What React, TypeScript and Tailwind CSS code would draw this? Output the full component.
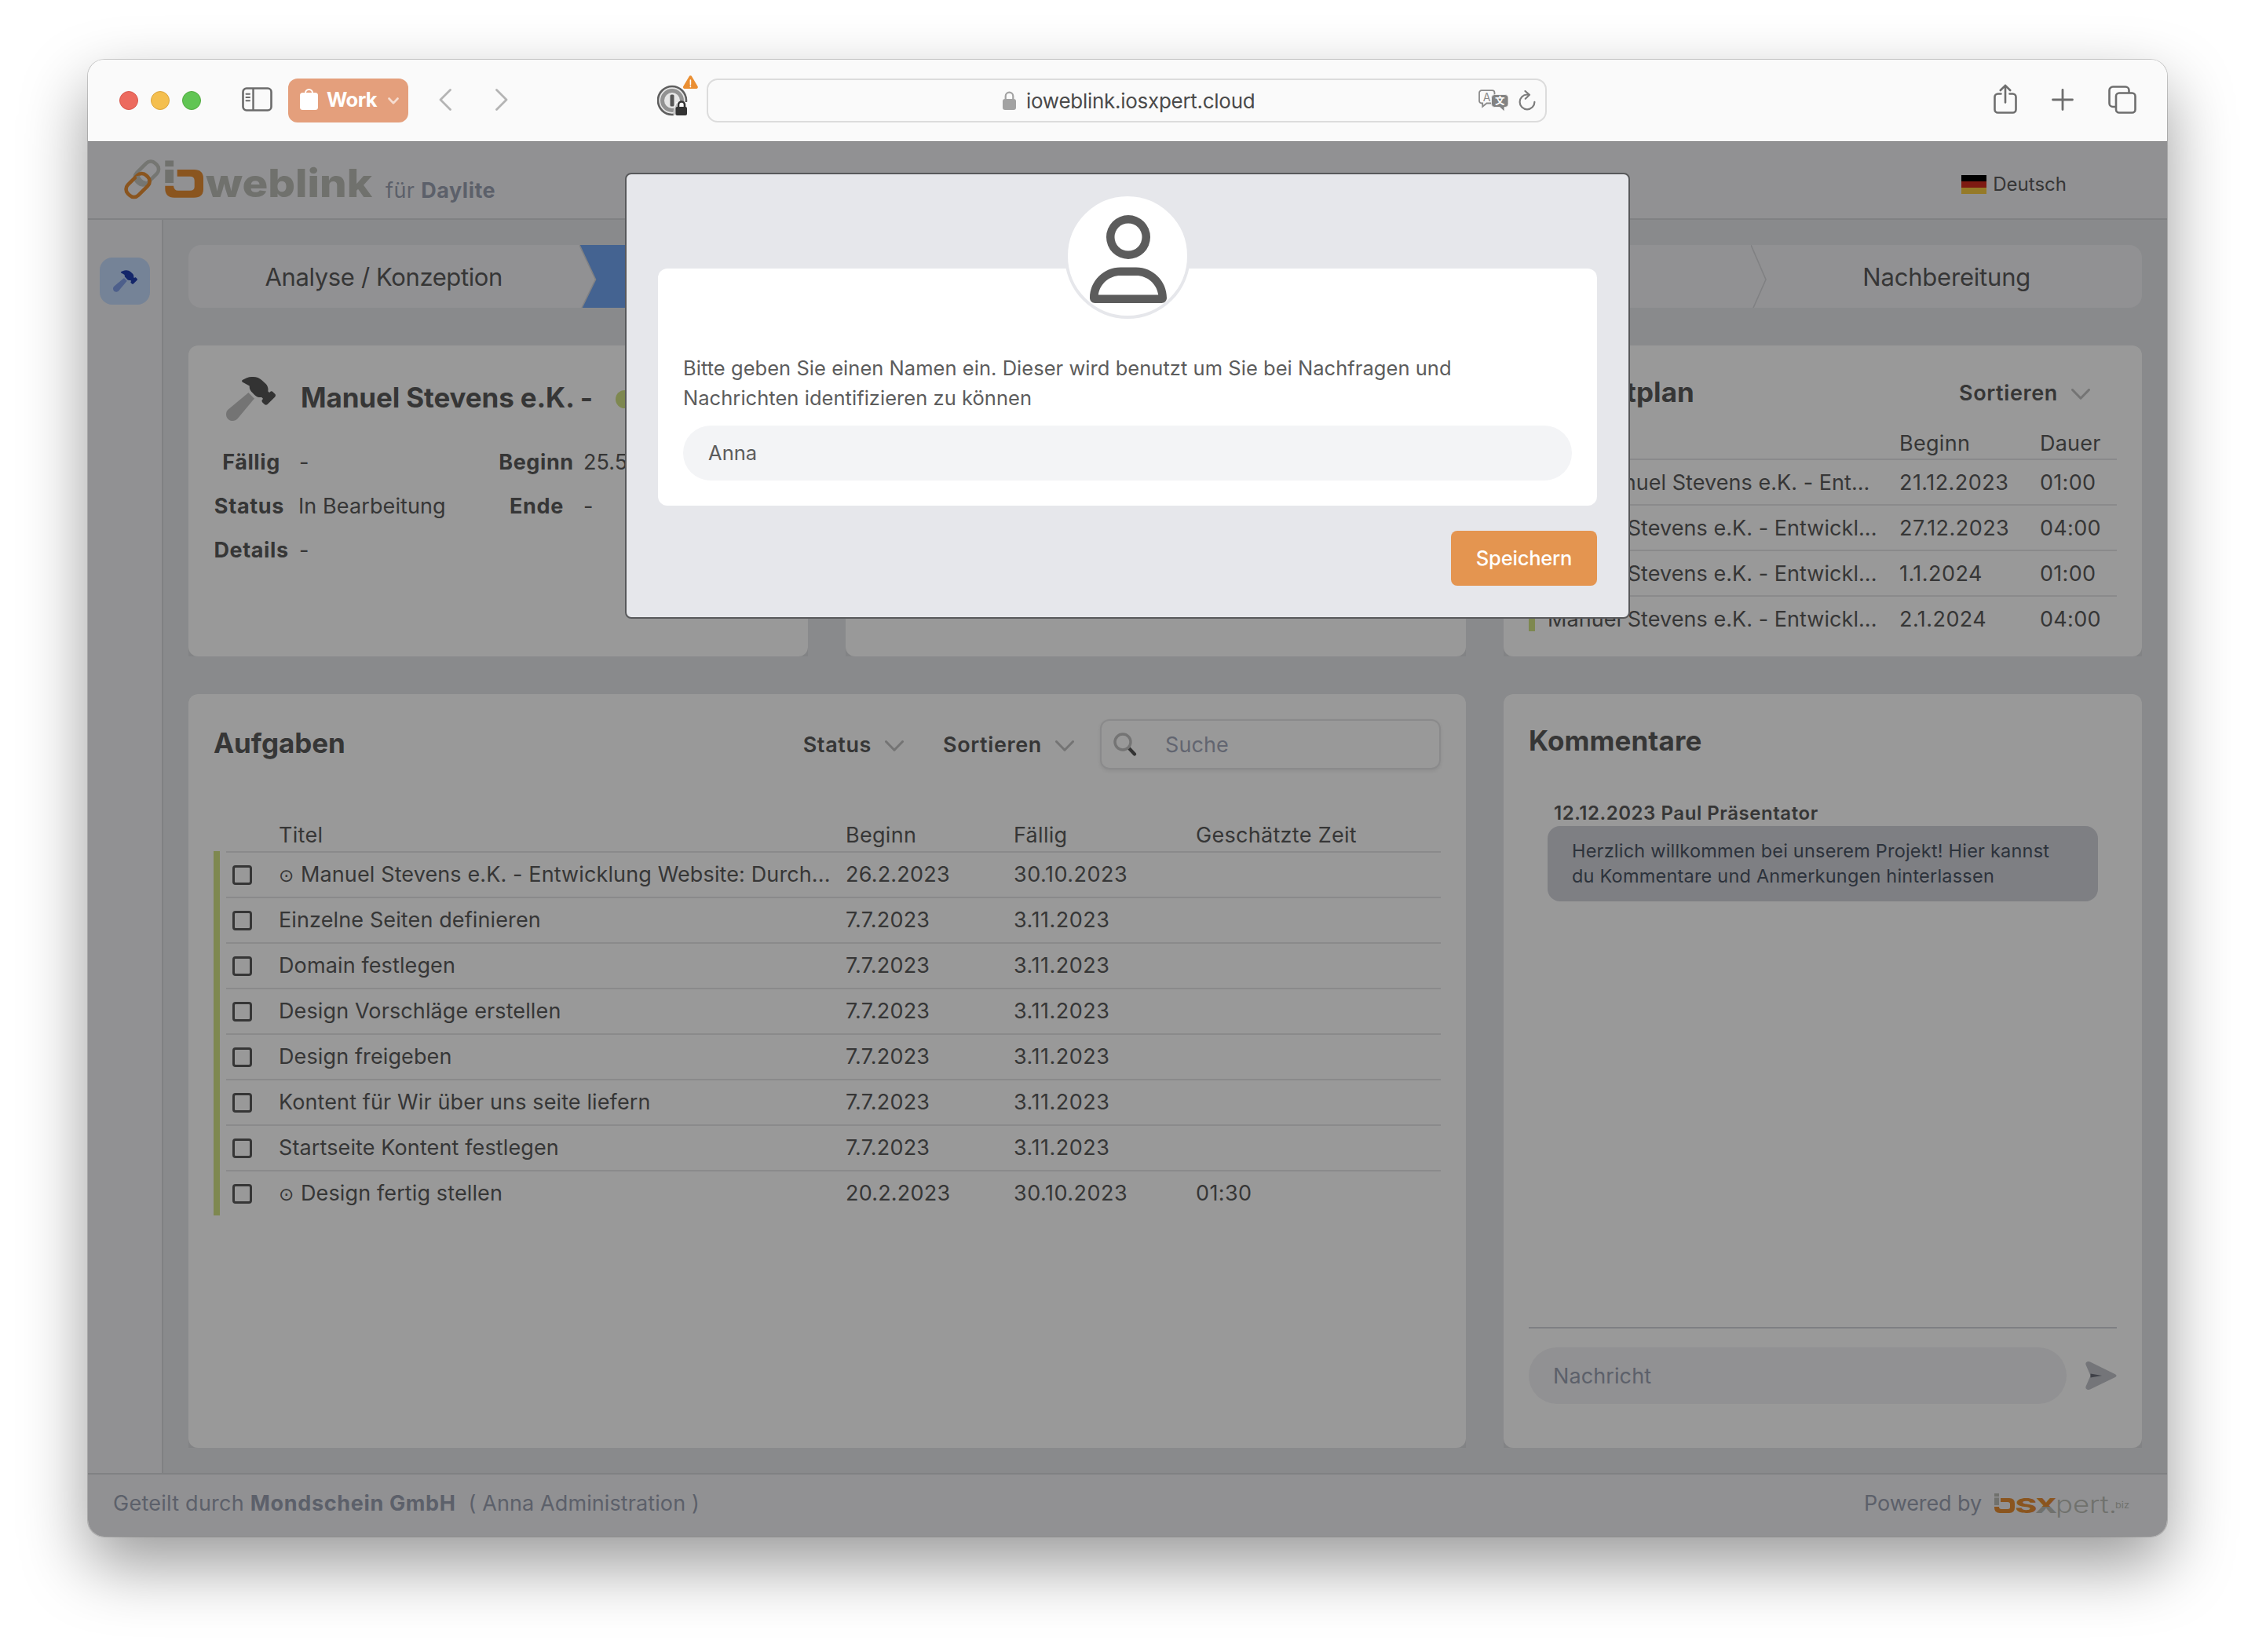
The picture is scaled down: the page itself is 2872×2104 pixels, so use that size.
import type { ReactNode } from "react";
import { FaRegUser } from "react-icons/fa6";

const tasks = [
  { milestone: true, title: "Manuel Stevens e.K. - Entwicklung Website: Durch...", start: "26.2.2023", due: "30.10.2023", time: "" },
  { title: "Einzelne Seiten definieren", start: "7.7.2023", due: "3.11.2023", time: "" },
  { title: "Domain festlegen", start: "7.7.2023", due: "3.11.2023", time: "" },
  { title: "Design Vorschläge erstellen", start: "7.7.2023", due: "3.11.2023", time: "" },
  { title: "Design freigeben", start: "7.7.2023", due: "3.11.2023", time: "" },
  { title: "Kontent für Wir über uns seite liefern", start: "7.7.2023", due: "3.11.2023", time: "" },
  { title: "Startseite Kontent festlegen", start: "7.7.2023", due: "3.11.2023", time: "" },
  { milestone: true, title: "Design fertig stellen", start: "20.2.2023", due: "30.10.2023", time: "01:30" },
];

const schedule = [
  { milestone: true, title: "Manuel Stevens e.K. - Ent...", start: "21.12.2023", length: "01:00" },
  { title: "Manuel Stevens e.K. - Entwickl...", start: "27.12.2023", length: "04:00" },
  { title: "Manuel Stevens e.K. - Entwickl...", start: "1.1.2024", length: "01:00" },
  { title: "Manuel Stevens e.K. - Entwickl...", start: "2.1.2024", length: "04:00" },
];

function Hammer({ className, head, handle }: { className: string; head: string; handle: string }) {
  return (
    <svg viewBox="0 0 576 512" className={className}>
      <path
        fill={head}
        d="M413.5 237.5c-28.2 4.8-58.2-3.6-80-25.4l-38.1-38.1C280.4 159 272 138.8 272 117.6V105.5L192.3 62c-5.3-2.9-8.6-8.6-8.3-14.7s3.9-11.5 9.5-14l47.2-21C259.1 4.2 279 0 299.2 0h18.1c36.7 0 72 14 98.7 39.1l44.6 42c24.2 22.8 33.2 55.7 26.6 86L503 183l8-8c9.4-9.4 24.6-9.4 33.9 0l24 24c9.4 9.4 9.4 24.6 0 33.9l-88 88c-9.4 9.4-24.6 9.4-33.9 0l-24-24c-9.4-9.4-9.4-24.6 0-33.9l8-8-17.5-17.5z"
      />
      <path
        fill={handle}
        d="M27.4 377.1L260.9 182.6c3.5 4.9 7.5 9.6 11.8 14l38.1 38.1c6 6 12.4 11.2 19.2 15.7L134.9 484.6c-14.5 17.4-36 27.4-58.6 27.4C34.1 512 0 477.8 0 435.7c0-22.6 10.1-44.1 27.4-58.6z"
      />
    </svg>
  );
}

function ChevronDown({ className }: { className: string }) {
  return (
    <svg viewBox="0 0 24 14" className={className} fill="none" stroke="#747474" strokeWidth="3" strokeLinecap="round" strokeLinejoin="round">
      <path d="M1.5 1.5L12 12.2L22.5 1.5" />
    </svg>
  );
}

function Dropdown({ label, className }: { label: string; className: string }) {
  return (
    <div className={`flex items-center ${className}`}>
      <span className="pt-[2px] text-[27px] font-semibold tracking-[0.62px]">{label}</span>
      <ChevronDown className="ml-[17px] mt-1 h-[14px] w-6" />
    </div>
  );
}

function Milestone() {
  return <span className="inline-block w-[28px] font-['DejaVu_Sans'] text-[23px] leading-none">⊙</span>;
}

function Card({ className, children }: { className: string; children: ReactNode }) {
  return (
    <div className={`rounded-t-[12px] bg-[#828385] ${className}`}>
      <div className="flex h-full flex-col rounded-[12px] bg-[#999999] px-8">{children}</div>
    </div>
  );
}

function Toolbar() {
  return (
    <div className="flex h-[104px] shrink-0 items-center bg-[#fafafa] pl-10">
      <div className="flex gap-4">
        <span className="size-6 rounded-full border border-[#d8584d] bg-[#ec6a5e]" />
        <span className="size-6 rounded-full border border-[#dba43c] bg-[#f4bf4f]" />
        <span className="size-6 rounded-full border border-[#52a93f] bg-[#61c554]" />
      </div>
      <svg viewBox="0 0 39 31" className="mb-[3px] ml-[52px] h-[31px] w-[39px]" fill="none" stroke="#6b6b6b">
        <rect x="1.5" y="1.5" width="36" height="28" rx="4.5" strokeWidth="2.6" />
        <path d="M14.5 2V29" strokeWidth="2.4" />
        <path d="M5.5 8.7H10M5.5 13H10M5.5 17.3H10" strokeWidth="2" strokeLinecap="round" />
      </svg>
      <div className="ml-5 flex h-14 w-[153px] items-center rounded-[12px] bg-[#e49f7c] pl-[15px]">
        <svg viewBox="0 0 23 27" className="mb-1 h-[27px] w-[23px]">
          <rect y="5" width="23" height="22" rx="3.5" fill="#fff" />
          <path d="M7 7V5.5a4.5 4.5 0 0 1 9 0V7" fill="none" stroke="#fff" strokeWidth="2" />
        </svg>
        <span className="ml-[11px] pb-[2px] text-[25.5px] font-bold tracking-[-0.6px] text-white">Work</span>
        <svg viewBox="0 0 14 9" className="ml-[14px] h-[9px] w-[14px]" fill="none" stroke="#f6ddd1" strokeWidth="2.6" strokeLinecap="round" strokeLinejoin="round">
          <path d="M1.5 1.5L7 7.3L12.5 1.5" />
        </svg>
      </div>
      <svg viewBox="0 0 16 28" className="mb-[3px] ml-[39px] h-7 w-4" fill="none" stroke="#b4b4b4" strokeWidth="2.8" strokeLinecap="round" strokeLinejoin="round">
        <path d="M14.5 1.5L2 14L14.5 26.5" />
      </svg>
      <svg viewBox="0 0 16 28" className="mb-[3px] ml-14 h-7 w-4" fill="none" stroke="#b4b4b4" strokeWidth="2.8" strokeLinecap="round" strokeLinejoin="round">
        <path d="M1.5 1.5L14 14L1.5 26.5" />
      </svg>
      <svg viewBox="0 0 54 54" className="mb-[10px] ml-[190px] h-[54px] w-[54px]">
        <circle cx="19" cy="32" r="18" fill="#e6e6e6" stroke="#5f5f5f" strokeWidth="2.6" />
        <circle cx="19" cy="32" r="12.5" fill="none" stroke="#929292" strokeWidth="5" />
        <rect x="16.5" y="24.5" width="5" height="15" rx="1.5" fill="#555" />
        <path d="M21 54V43L24 34H40V54Z" fill="#fafafa" />
        <path d="M20.5 45L25 35V50.5H20.5Z" fill="#c4c4c4" />
        <rect x="23.5" y="40" width="14.5" height="11" rx="2" fill="#333" />
        <path d="M27 41V37.5a4 4 0 0 1 8 0V41" fill="none" stroke="#333" strokeWidth="2.6" />
        <path d="M40.6 1.4a2 2 0 0 1 3.6 0L51.6 14a2 2 0 0 1-1.8 3H35a2 2 0 0 1-1.8-3Z" fill="#ea8f33" />
        <path d="M42.4 6V11.6M42.4 13.6V14.6" stroke="#fff" strokeWidth="1.6" strokeLinecap="round" />
      </svg>
      <div className="ml-[9px] flex h-14 w-[1070px] items-center rounded-[14px] border-2 border-[#dcdcdc]">
        <svg viewBox="0 0 17 24" className="ml-[375px] h-6 w-[17px]">
          <rect y="10" width="17" height="14" rx="3" fill="#a2a2a2" />
          <path d="M3.7 11V6.5a4.8 4.8 0 0 1 9.6 0V11" fill="none" stroke="#a2a2a2" strokeWidth="2.2" />
        </svg>
        <span className="ml-[13px] w-[576px] pt-px text-[26px] tracking-[-0.28px] text-[#4a4a4a]">ioweblink.iosxpert.cloud</span>
        <svg viewBox="0 0 38 28" className="h-7 w-[38px]">
          <path d="M4 1.2H17.5a3 3 0 0 1 3 3V14.5a3 3 0 0 1-3 3H10.5L5.2 21.8V17.5H4a3 3 0 0 1-3-3V4.2a3 3 0 0 1 3-3Z" fill="none" stroke="#8a8a8a" strokeWidth="1.8" />
          <text x="10.7" y="14.6" textAnchor="middle" fontFamily="Inter" fontSize="14" fill="#8a8a8a">A</text>
          <path d="M20.5 6.5H34a4 4 0 0 1 4 4V18.500a4 4 0 0 1-4 4H33V28L27 22.5H20.500a4 4 0 0 1-4-4V10.500a4 4 0 0 1 4-4Z" fill="#828282" stroke="#fafafa" strokeWidth=".8" />
          <text x="27.3" y="19" textAnchor="middle" fontFamily="'Noto Sans CJK SC', sans-serif" fontWeight="700" fontSize="12.500" fill="#fff">文</text>
        </svg>
        <svg viewBox="0 0 22 26" className="ml-[13px] h-[26px] w-[22px]" fill="none" stroke="#7c7c7c" strokeWidth="2.2" strokeLinecap="round" strokeLinejoin="round">
          <path d="M12.500 5.500H11a9.400 9.400 0 1 0 9.400 9.400M8.500 1L14 5.800L8.800 10.800" />
        </svg>
      </div>
      <svg viewBox="0 0 30 38" className="mb-[5px] ml-[569px] h-[38px] w-[30px]" fill="none" stroke="#6e6e6e" strokeWidth="2.600" strokeLinecap="round" strokeLinejoin="round">
        <path d="M9.500 12.500H5.500a4 4 0 0 0-4 4V32.500a4 4 0 0 0 4 4H24.500a4 4 0 0 0 4-4V16.500a4 4 0 0 0-4-4H20.500M15 23.500V1.800M8.800 8L15 1.800L21.200 8" />
      </svg>
      <svg viewBox="0 0 28 28" className="mb-[3px] ml-11 size-7" stroke="#6e6e6e" strokeWidth="2.800" strokeLinecap="round">
        <path d="M14 1.500V26.500M1.500 14H26.500" />
      </svg>
      <svg viewBox="0 0 36 36" className="mb-[3px] ml-11 size-9" fill="none" stroke="#6e6e6e" strokeWidth="2.600" strokeLinejoin="round">
        <rect x="10" y="9.500" width="24.500" height="25" rx="4" />
        <path d="M9.500 27H6a4.500 4.500 0 0 1-4.500-4.500V6A4.500 4.500 0 0 1 6 1.500H22A4.500 4.500 0 0 1 26.500 6V9" />
      </svg>
    </div>
  );
}

function WeblinkLogo() {
  return (
    <svg viewBox="158 196 320 64" className="ml-[46px] mt-[15px] h-16 w-[320px] overflow-visible">
      <g fill="none" strokeWidth="4.600">
        <rect x="-16.500" y="-9.500" width="33" height="19" rx="8" transform="translate(187 220.500) rotate(-45)" stroke="#757672" />
        <rect x="-16.500" y="-9.500" width="33" height="19" rx="8" transform="translate(175.600 236) rotate(-45)" stroke="#8a551f" />
        <path d="M175.500 224Q177.500 231.500 185.500 233" stroke="#757672" />
      </g>
      <rect x="210.300" y="204.500" width="10.800" height="7.600" fill="#70716d" />
      <rect x="210.300" y="216" width="10.800" height="17" fill="#70716d" />
      <path
        fill="#8a551f"
        d="M225.700 216H247Q259 216 259 227V241Q259 251.700 247 251.700H222Q210.300 251.700 210.300 240V236.700H221Q221.500 242.700 227 242.700H242Q247.700 242.700 247.700 238V230Q247.700 224.700 242 224.700H225.700Z"
      />
      <text x="262" y="251.300" textLength="212" lengthAdjust="spacingAndGlyphs" fontFamily="Inter, sans-serif" fontWeight="800" fontSize="50" fill="#70716d">
        weblink
      </text>
    </svg>
  );
}

function ExpertLogo() {
  return (
    <svg viewBox="0 0 174 32" className="mt-[5px] h-8 w-[174px] overflow-visible">
      <defs>
        <linearGradient id="x-split" x1="0" y1="0" x2="0" y2="1">
          <stop offset="0.550" stopColor="#8a551f" />
          <stop offset="0.550" stopColor="#70716d" />
        </linearGradient>
      </defs>
      <rect width="6" height="4" fill="#70716d" />
      <rect y="5.500" width="6" height="9.500" fill="#70716d" />
      <path fill="#8a551f" d="M8 6H19Q26 6 26 13V18Q26 25 19 25H7Q0 25 0 18V17H6Q6 20 9 20H17Q20 20 20 17.500V13.500Q20 11 17 11H8Z" />
      <text x="26.500" y="25" textLength="28" lengthAdjust="spacingAndGlyphs" fontFamily="Inter, sans-serif" fontWeight="800" fontSize="26" fill="#8a551f">S</text>
      <text x="52" y="25" textLength="28" lengthAdjust="spacingAndGlyphs" fontFamily="Inter, sans-serif" fontWeight="800" fontSize="26" fill="url(#x-split)">X</text>
      <text x="78" y="25" textLength="78" lengthAdjust="spacingAndGlyphs" fontFamily="Inter, sans-serif" fontWeight="300" fontSize="30" fill="#70716d">pert.</text>
      <text x="154" y="19" textLength="18" lengthAdjust="spacingAndGlyphs" fontFamily="Inter, sans-serif" fontWeight="400" fontSize="11" fill="#70716d">biz</text>
    </svg>
  );
}

function Header() {
  return (
    <header className="flex h-[100px] shrink-0 items-start border-b-2 border-t border-b-[#808183] border-t-[#747475] bg-[#919193]">
      <WeblinkLogo />
      <p className="ml-[13px] mt-[42px] text-[27px] leading-10 tracking-[0.400px] text-[#5c606a]">
        für <span className="font-bold tracking-[0.500px]">Daylite</span>
      </p>
      <div className="ml-auto mr-[128px] mt-[34px] flex h-10 items-center">
        <div className="flex h-6 w-8 flex-col">
          <span className="h-2 bg-black" />
          <span className="h-2 bg-[#7e1a12]" />
          <span className="h-2 bg-[#957a28]" />
        </div>
        <span className="ml-[8px] text-[24px]">Deutsch</span>
      </div>
    </header>
  );
}

function Steps() {
  return (
    <div className="grid h-20 shrink-0 grid-cols-5 overflow-hidden rounded-[16px] bg-[#919193] text-[31px] tracking-[-0.380px]">
      <div className="flex items-center justify-center pt-[2px]">Analyse / Konzeption</div>
      <div className="relative bg-[#446391]">
        <svg viewBox="0 0 22 80" className="absolute left-0 top-0 h-20 w-[22px]">
          <path d="M0 0L20.500 44L3 80H0Z" fill="#919193" />
          <path d="M0 0L20.500 44L3 80" fill="none" stroke="#808183" strokeWidth="1.600" />
        </svg>
      </div>
      <div />
      <div />
      <div className="relative flex items-center justify-center pt-[2px] tracking-[-0.200px]">
        <svg viewBox="0 0 22 80" className="absolute left-0 top-0 h-20 w-[22px]">
          <path d="M0 0L19 44L3 80" fill="none" stroke="#808183" strokeWidth="1.600" />
        </svg>
        Nachbereitung
      </div>
    </div>
  );
}

function ProjectCard() {
  return (
    <Card className="h-[396px] w-[789px]">
      <div className="mt-9 flex h-16 items-center pl-4">
        <Hammer className="h-14 w-[63px]" head="#333333" handle="#747474" />
        <h2 className="ml-[32px] pb-[3px] text-[35px] font-bold tracking-[-0.120px]">Manuel Stevens e.K. -</h2>
        <span className="ml-[29px] size-[23px] rounded-full bg-[#7e8850]" />
      </div>
      <div className="mt-[21px] grid grid-cols-[107px_256px_107px_1fr] text-[27px] leading-[56px] tracking-[0.100px]">
        <b className="w-24 text-center font-bold tracking-[0.600px]">Fällig</b>
        <span className="pl-[2px]">-</span>
        <b className="w-24 text-center font-bold tracking-[0.600px]">Beginn</b>
        <span className="pl-px">25.5.2023</span>
        <b className="w-[91px] text-center font-bold tracking-[0.700px]">Status</b>
        <span className="pl-px">In Bearbeitung</span>
        <b className="w-[97px] text-center font-bold tracking-[0.700px]">Ende</b>
        <span className="pl-px">-</span>
        <b className="w-24 text-center font-bold tracking-[0.600px]">Details</b>
        <span className="pl-[2px]">-</span>
      </div>
    </Card>
  );
}

function ScheduleCard() {
  return (
    <Card className="h-[396px] w-[813px]">
      <div className="mt-8 flex h-14 shrink-0 items-center">
        <h2 className="w-[211px] whitespace-nowrap pb-[2px] text-right text-[35px] font-bold tracking-[0.100px]">Projektplan</h2>
        <Dropdown label="Sortieren" className="ml-auto mr-[34px]" />
      </div>
      <div className="mt-4 flex h-10 shrink-0 items-center pt-[2px] text-[27px]">
        <span className="w-[472px]" />
        <span className="w-[179px] tracking-[0.300px]">Beginn</span>
        <span className="tracking-[0.200px]">Dauer</span>
      </div>
      <div className="flex h-[220px] shrink-0 overflow-hidden text-[27px]">
        <div className="h-[232px] w-2 shrink-0 bg-[#7e8850]" />
        <div className="ml-2 flex grow flex-col">
          {schedule.map((s, i) => (
            <div key={i} className="flex h-[58px] shrink-0 items-center border-t-2 border-[#8a8a8b] pt-[2px]">
              <span className="w-[456px] whitespace-nowrap pl-2 tracking-[0.050px]">
                {s.milestone && (
                  <span className="ml-[29px]">
                    <Milestone />
                  </span>
                )}
                {s.title}
              </span>
              <span className="w-[179px] tracking-[0.450px]">{s.start}</span>
              <span className="tracking-[0.300px]">{s.length}</span>
            </div>
          ))}
        </div>
      </div>
    </Card>
  );
}

function TasksCard() {
  return (
    <Card className="h-[960px] w-[1627px]">
      <div className="mt-8 flex h-16 items-center">
        <h2 className="pb-[3px] text-[35px] font-bold tracking-[-0.050px]">Aufgaben</h2>
        <Dropdown label="Status" className="ml-auto" />
        <Dropdown label="Sortieren" className="ml-[50px]" />
        <div className="ml-[33px] flex h-16 w-[434px] items-center rounded-[12px] border-2 border-[#8a8a8b] pl-[15px] shadow-[0_2px_4px_rgba(0,0,0,0.08)]">
          <svg viewBox="0 0 30 30" className="size-[30px]" fill="none">
            <path d="M20 20L27 27.500" stroke="#333333" strokeWidth="4.200" strokeLinecap="round" />
            <circle cx="12" cy="12" r="10" stroke="#747474" strokeWidth="3.400" />
          </svg>
          <span className="ml-[36px] pt-[2px] text-[27px] tracking-[0.100px] text-[#626570]">Suche</span>
        </div>
      </div>
      <div className="mt-16 flex h-10 items-center pt-px text-[27px] tracking-[0.300px]">
        <span className="w-[805px] pl-[83px]">Titel</span>
        <span className="w-[214px]">Beginn</span>
        <span className="w-[232px]">Fällig</span>
        <span>Geschätzte Zeit</span>
      </div>
      <div className="flex text-[27px]">
        <div className="w-2 bg-[#7e8850]" />
        <div className="ml-2 grow">
          {tasks.map((t, i) => (
            <div key={i} className="flex h-[58px] items-center border-t-2 border-[#8a8a8b] pt-px">
              <span className="mb-px ml-2 size-[25px] rounded-[4px] border-[3px] border-[#363636]" />
              <span className="ml-[34px] w-[722px] whitespace-nowrap tracking-[0.120px]">
                {t.milestone && <Milestone />}
                {t.title}
              </span>
              <span className="w-[214px] tracking-[0.200px]">{t.start}</span>
              <span className="w-[232px] tracking-[0.500px]">{t.due}</span>
              <span className="tracking-[0.400px]">{t.time}</span>
            </div>
          ))}
        </div>
      </div>
    </Card>
  );
}

function CommentsCard() {
  return (
    <Card className="h-[960px] w-[813px]">
      <h2 className="mt-8 text-[35px] font-bold leading-[54px] tracking-[0.100px]">Kommentare</h2>
      <p className="ml-8 mt-[49px] text-[24px] font-semibold leading-[33px] tracking-[0.550px]">12.12.2023 Paul Präsentator</p>
      <p className="mx-6 rounded-[16px] bg-[#7e7f83] px-[31px] py-4 text-[23.500px] leading-8 tracking-[0.210px] text-[#2c323b]">
        Herzlich willkommen bei unserem Projekt! Hier kannst
        <br />
        du Kommentare und Anmerkungen hinterlassen
      </p>
      <div className="mb-14 mt-auto flex items-center border-t-2 border-[#7e7f83] pt-6">
        <div className="flex h-[72px] w-[685px] items-center rounded-full bg-[#919193] pl-[31px] pt-[2px] text-[27px] tracking-[0.100px] text-[#5c606a]">Nachricht</div>
        <svg viewBox="0 0 40 36" className="ml-6 h-9 w-10">
          <path d="M.5 4C-.5 1 3-1 6 .5L38 16.200c2 1 2 2.800 0 3.800L6 35.500C3 37-.5 35 .5 32L6.500 18Z" fill="#747579" />
          <path d="M6.500 15.500L21 18L6.500 20.500Z" fill="#3f4148" />
        </svg>
      </div>
    </Card>
  );
}

function NameDialog() {
  return (
    <div className="absolute left-[684px] top-[144px] flex h-[568px] w-[1280px] flex-col rounded-[8px] border-2 border-[#58595b] bg-[#e6e7eb] px-10 text-[25.500px] tracking-[0.040px] text-[#5c5c5c]">
      <div className="relative mt-[120px] rounded-[12px] bg-white px-8 pb-8 pt-[108px]">
        <div className="absolute left-1/2 top-[-96px] flex size-40 -translate-x-1/2 justify-center rounded-full border-4 border-[#e6e7eb] bg-white pl-px pt-6">
          <FaRegUser className="h-[112px] w-[98px]" />
        </div>
        <p className="leading-[38px]">
          Bitte geben Sie einen Namen ein. Dieser wird benutzt um Sie bei Nachfragen und
          <br />
          Nachrichten identifizieren zu können
        </p>
        <div className="mt-4 flex h-[70px] items-center rounded-full bg-[#f3f4f6] pl-8">Anna</div>
      </div>
      <button className="mt-8 h-[70px] w-[186px] self-end rounded-[8px] bg-[#e49550] font-medium tracking-[-0.200px] text-white">Speichern</button>
    </div>
  );
}

export default function App() {
  return (
    <div className="h-[2104px] w-[2872px] overflow-hidden bg-white pl-[112px] pt-[76px] font-['Inter',sans-serif] text-[#363636]">
      <div className="relative flex h-[1881px] w-[2648px] flex-col overflow-hidden rounded-[21px] shadow-[0_0_0_1px_rgba(0,0,0,0.180),0_36px_84px_rgba(0,0,0,0.400)]">
        <Toolbar />
        <Header />
        <div className="flex h-[1596px] shrink-0">
          <aside className="w-24 shrink-0 border-r-2 border-[#808183] bg-[#919193] pl-[15px] pt-12">
            <div className="flex h-[60px] w-16 items-center justify-center rounded-[16px] bg-[#758397]">
              <Hammer className="h-7 w-[31px]" head="#14266a" handle="#4d5f8b" />
            </div>
          </aside>
          <main className="flex grow flex-col gap-12 bg-[#898a8c] p-8">
            <Steps />
            <div className="flex gap-12">
              <ProjectCard />
              <Card className="h-[396px] w-[790px]">{null}</Card>
              <ScheduleCard />
            </div>
            <div className="flex gap-12">
              <TasksCard />
              <CommentsCard />
            </div>
          </main>
        </div>
        <footer className="flex grow items-center border-t-2 border-[#808183] bg-[#919193] pb-[5px] pl-8 pr-[46px] text-[27px] text-[#5c606a]">
          <span className="whitespace-pre tracking-[0.250px]">Geteilt durch </span>
          <b className="font-bold tracking-[0.650px]">Mondschein GmbH</b>
          <span className="ml-[16px] tracking-[0.100px]">( Anna Administration )</span>
          <span className="ml-auto mr-[16px] tracking-[-0.100px]">Powered by</span>
          <ExpertLogo />
        </footer>
        <NameDialog />
      </div>
    </div>
  );
}
